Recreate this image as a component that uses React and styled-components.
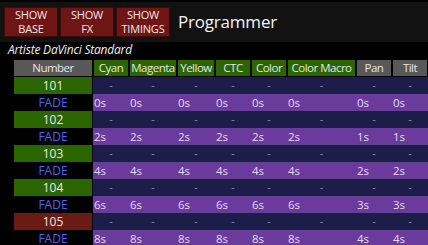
import React from "react";
import styled, { createGlobalStyle } from "styled-components";

const GlobalStyle = createGlobalStyle`
  html, body {
    margin: 0;
    padding: 0;
    background: #000;
    font-family: "Open Sans", "Noto Sans", "DejaVu Sans", sans-serif;
    overflow: hidden;
  }
`;

const columns = [
  { name: "Cyan", kind: "green" },
  { name: "Magenta", kind: "green" },
  { name: "Yellow", kind: "green" },
  { name: "CTC", kind: "green" },
  { name: "Color", kind: "green" },
  { name: "Color Macro", kind: "green" },
  { name: "Pan", kind: "gray" },
  { name: "Tilt", kind: "gray" },
];

// fade time per column for each preset
const presets = [
  { number: "101", state: "green", fades: ["0s", "0s", "0s", "0s", "0s", "0s", "0s", "0s"] },
  { number: "102", state: "green", fades: ["2s", "2s", "2s", "2s", "2s", "2s", "1s", "1s"] },
  { number: "103", state: "green", fades: ["4s", "4s", "4s", "4s", "4s", "4s", "2s", "2s"] },
  { number: "104", state: "green", fades: ["6s", "6s", "6s", "6s", "6s", "6s", "3s", "3s"] },
  { number: "105", state: "red", fades: ["8s", "8s", "8s", "8s", "8s", "8s", "4s", "4s"] },
];

const headerColors = { green: "#2b6500", gray: "#585858" };
const numberColors = { green: "#2b6500", red: "#6b1a14" };

const Page = styled.div`
  width: 428px;
  height: 245px;
  background: #000;
  padding-top: 2px;
  box-sizing: border-box;
  overflow: hidden;
`;

const TopBar = styled.div`
  display: flex;
  align-items: center;
  gap: 2px;
  height: 40px;
  background: #121212;
  padding: 0 4px;
`;

const ShowButton = styled.div`
  display: flex;
  align-items: center;
  justify-content: center;
  text-align: center;
  width: 52px;
  height: 28px;
  background: #6e1515;
  border: 1px solid #3e0909;
  color: #f0e6e6;
  font-size: 11px;
  line-height: 14px;
  letter-spacing: -0.2px;
`;

const Title = styled.div`
  margin-left: 6px;
  color: #f2f2f2;
  font-size: 17px;
  letter-spacing: -0.2px;
  margin-top: -2px;
`;

const Subtitle = styled.div`
  height: 18px;
  line-height: 16px;
  padding-left: 8px;
  color: #f0f0f0;
  font-size: 12px;
  font-style: italic;
  letter-spacing: -0.2px;
`;

const Grid = styled.div`
  display: grid;
  grid-template-columns: 79px 36px 48px 38px 36px 36px 69px 36px 36px;
  margin-left: 14px;
  font-size: 11.5px;
`;

const HeadCell = styled.div`
  height: 16px;
  line-height: 16px;
  margin: 0 1px 1px ${(p) => (p.$first ? 0 : 1)}px;
  background: ${(p) => headerColors[p.$kind]};
  color: #e6e6e6;
  text-align: center;
  white-space: nowrap;
  letter-spacing: -0.5px;
  overflow: hidden;
`;

const NumberCell = styled.div`
  height: 17px;
  line-height: 17px;
  margin-right: 1px;
  text-align: center;
  background: ${(p) => (p.$state ? numberColors[p.$state] : "#000")};
  color: ${(p) => (p.$state ? "#ecebe6" : "#5263ef")};
  font-size: 12px;
`;

const DashCell = styled.div`
  height: 17px;
  line-height: 15px;
  text-align: center;
  background: #1c1d48;
  color: #8890b8;
  font-size: 11px;
`;

const FadeCell = styled.div`
  height: 17px;
  line-height: 17px;
  padding-left: 1px;
  background: #6a3a9c;
  color: #e2dcf2;
`;

export default function App() {
  return (
    <Page>
      <GlobalStyle />
      <TopBar>
        <ShowButton>SHOW<br />BASE</ShowButton>
        <ShowButton>SHOW<br />FX</ShowButton>
        <ShowButton>SHOW<br />TIMINGS</ShowButton>
        <Title>Programmer</Title>
      </TopBar>
      <Subtitle>Artiste DaVinci Standard</Subtitle>
      <Grid>
        <HeadCell $kind="gray" $first>Number</HeadCell>
        {columns.map((c) => (
          <HeadCell key={c.name} $kind={c.kind}>{c.name}</HeadCell>
        ))}
        {presets.map((p) => (
          <React.Fragment key={p.number}>
            <NumberCell $state={p.state}>{p.number}</NumberCell>
            {columns.map((c) => (
              <DashCell key={c.name}>-</DashCell>
            ))}
            <NumberCell>FADE</NumberCell>
            {p.fades.map((f, i) => (
              <FadeCell key={i}>{f}</FadeCell>
            ))}
          </React.Fragment>
        ))}
      </Grid>
    </Page>
  );
}
